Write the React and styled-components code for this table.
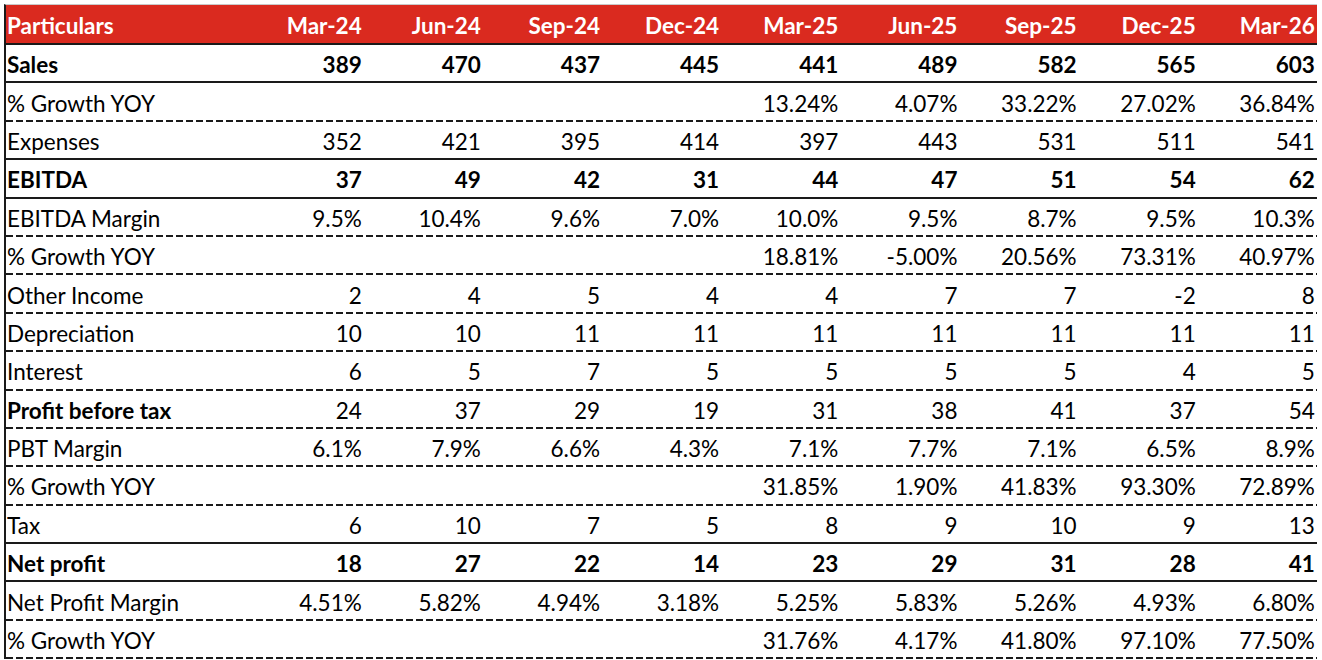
import React from "react";
import styled, { createGlobalStyle, css } from "styled-components";

const Global = createGlobalStyle`
  html, body { margin: 0; padding: 0; background: #ffffff; }
  body { font-family: Lato, "Open Sans", "Liberation Sans", sans-serif; color: #000; }
`;

const COLS = "238.6px repeat(9, 119.15px)";

const Sheet = styled.div`
  margin: 4px 0 0 4px;
  width: 1311px;
  border-top: 1px solid #c9c9c9;
  border-left: 2px solid #1a1a1a;
`;

const HeaderRow = styled.div`
  display: grid;
  grid-template-columns: ${COLS};
  height: 40px;
  box-sizing: border-box;
  background: #da2a1f;
  border-bottom: 2px solid #1a1a1a;
  align-items: center;
`;

const HeadCell = styled.div`
  color: #ffffff;
  font-weight: 700;
  font-size: 22.5px;
  text-align: ${(p) => (p.$first ? "left" : "right")};
  padding: ${(p) => (p.$first ? "3px 0 0 1px" : "3px 2px 0 0")};
  white-space: nowrap;
`;

const dashed = css`
  background-image: repeating-linear-gradient(
    to right,
    #1a1a1a 0 7px,
    transparent 7px 10px
  );
  background-size: 100% 2px;
  background-position: left bottom;
  background-repeat: no-repeat;
  padding-bottom: 2px;
`;

const solid = css`
  border-bottom: 2px solid #1a1a1a;
`;

const DataRow = styled.div`
  display: grid;
  grid-template-columns: ${COLS};
  height: 38.4px;
  box-sizing: border-box;
  align-items: center;
  ${(p) => (p.$line === "solid" ? solid : dashed)}
`;

const Cell = styled.div`
  font-size: 22.5px;
  font-weight: ${(p) => (p.$bold ? 700 : 400)};
  text-align: ${(p) => (p.$first ? "left" : "right")};
  padding: ${(p) => (p.$first ? "3px 0 0 1px" : "3px 2px 0 0")};
  white-space: nowrap;
`;

const headers = [
  "Mar-24", "Jun-24", "Sep-24", "Dec-24", "Mar-25",
  "Jun-25", "Sep-25", "Dec-25", "Mar-26",
];

const rows = [
  { label: "Sales", bold: true, valBold: true, line: "solid", v: ["389", "470", "437", "445", "441", "489", "582", "565", "603"] },
  { label: "% Growth YOY", line: "dashed", v: ["", "", "", "", "13.24%", "4.07%", "33.22%", "27.02%", "36.84%"] },
  { label: "Expenses", line: "solid", v: ["352", "421", "395", "414", "397", "443", "531", "511", "541"] },
  { label: "EBITDA", bold: true, valBold: true, line: "solid", v: ["37", "49", "42", "31", "44", "47", "51", "54", "62"] },
  { label: "EBITDA Margin", line: "dashed", v: ["9.5%", "10.4%", "9.6%", "7.0%", "10.0%", "9.5%", "8.7%", "9.5%", "10.3%"] },
  { label: "% Growth YOY", line: "dashed", v: ["", "", "", "", "18.81%", "-5.00%", "20.56%", "73.31%", "40.97%"] },
  { label: "Other Income", line: "dashed", v: ["2", "4", "5", "4", "4", "7", "7", "-2", "8"] },
  { label: "Depreciation", line: "dashed", v: ["10", "10", "11", "11", "11", "11", "11", "11", "11"] },
  { label: "Interest", line: "dashed", v: ["6", "5", "7", "5", "5", "5", "5", "4", "5"] },
  { label: "Profit before tax", bold: true, line: "dashed", v: ["24", "37", "29", "19", "31", "38", "41", "37", "54"] },
  { label: "PBT Margin", line: "dashed", v: ["6.1%", "7.9%", "6.6%", "4.3%", "7.1%", "7.7%", "7.1%", "6.5%", "8.9%"] },
  { label: "% Growth YOY", line: "dashed", v: ["", "", "", "", "31.85%", "1.90%", "41.83%", "93.30%", "72.89%"] },
  { label: "Tax", line: "solid", v: ["6", "10", "7", "5", "8", "9", "10", "9", "13"] },
  { label: "Net profit", bold: true, valBold: true, line: "solid", v: ["18", "27", "22", "14", "23", "29", "31", "28", "41"] },
  { label: "Net Profit Margin", line: "dashed", v: ["4.51%", "5.82%", "4.94%", "3.18%", "5.25%", "5.83%", "5.26%", "4.93%", "6.80%"] },
  { label: "% Growth YOY", line: "dashed", v: ["", "", "", "", "31.76%", "4.17%", "41.80%", "97.10%", "77.50%"] },
];

export default function App() {
  return (
    <>
      <Global />
      <Sheet>
        <HeaderRow>
          <HeadCell $first>Particulars</HeadCell>
          {headers.map((h) => (
            <HeadCell key={h}>{h}</HeadCell>
          ))}
        </HeaderRow>
        {rows.map((r, i) => (
          <DataRow key={i} $line={r.line}>
            <Cell $first $bold={r.bold}>{r.label}</Cell>
            {r.v.map((val, j) => (
              <Cell key={j} $bold={r.valBold}>{val}</Cell>
            ))}
          </DataRow>
        ))}
      </Sheet>
    </>
  );
}
